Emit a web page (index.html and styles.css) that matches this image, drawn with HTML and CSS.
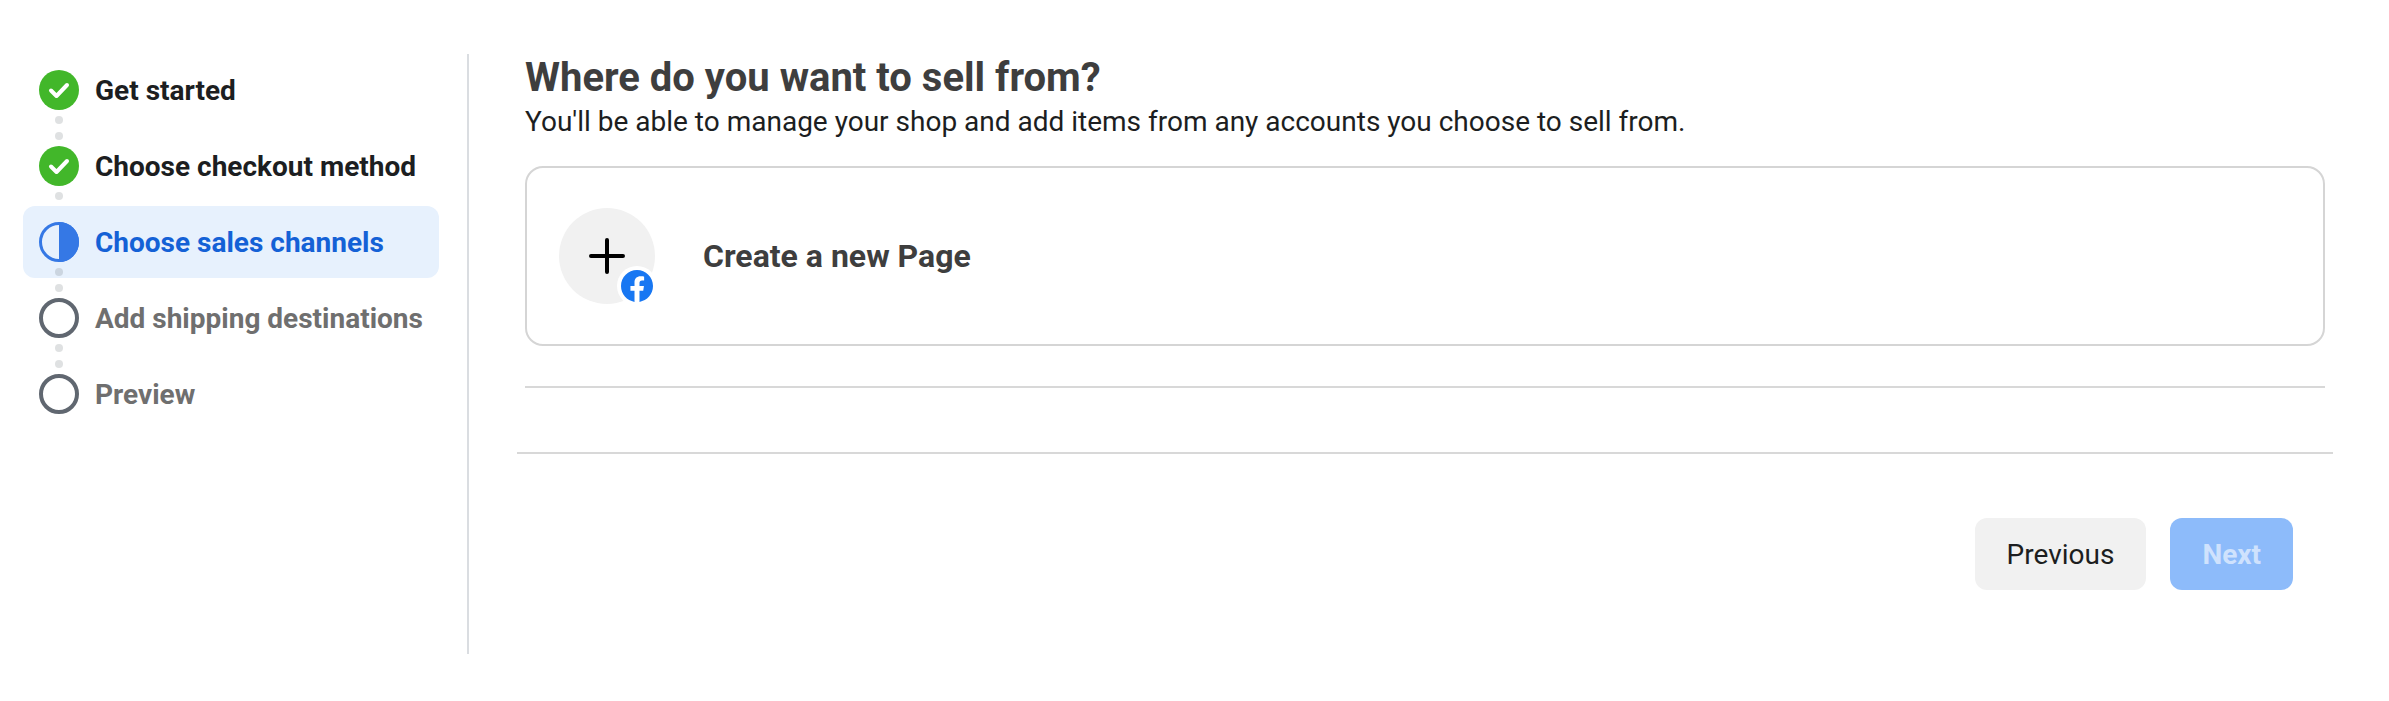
FILE: index.html
```html
<!DOCTYPE html>
<html lang="en">
  <head>
    <meta charset="UTF-8" />
    <title>Where do you want to sell from?</title>
    <link rel="stylesheet" href="styles.css">
  </head>
  <body>
    <div class="page">
      <nav class="steps">
        <div class="step step-done">
          <svg class="step-icon" viewBox="0 0 40 40"><circle cx="20" cy="20" r="20" fill="#42b72a"/><path d="M12 20.5l5.5 5.5 10.5-11" fill="none" stroke="#fff" stroke-width="4" stroke-linecap="round" stroke-linejoin="round"/></svg>
          <span>Get started</span>
        </div>
        <div class="step step-done">
          <svg class="step-icon" viewBox="0 0 40 40"><circle cx="20" cy="20" r="20" fill="#42b72a"/><path d="M12 20.5l5.5 5.5 10.5-11" fill="none" stroke="#fff" stroke-width="4" stroke-linecap="round" stroke-linejoin="round"/></svg>
          <span>Choose checkout method</span>
        </div>
        <div class="step step-current">
          <svg class="step-icon" viewBox="0 0 40 40"><circle cx="20" cy="20" r="18.5" fill="none" stroke="#3578e5" stroke-width="3"/><path d="M20 0a20 20 0 0 1 0 40z" fill="#3578e5"/></svg>
          <span>Choose sales channels</span>
        </div>
        <div class="step step-todo">
          <svg class="step-icon" viewBox="0 0 40 40"><circle cx="20" cy="20" r="18" fill="none" stroke="#606770" stroke-width="4"/></svg>
          <span>Add shipping destinations</span>
        </div>
        <div class="step step-todo step-last">
          <svg class="step-icon" viewBox="0 0 40 40"><circle cx="20" cy="20" r="18" fill="none" stroke="#606770" stroke-width="4"/></svg>
          <span>Preview</span>
        </div>
      </nav>

      <main class="content">
        <div class="section">
          <h1 class="title">Where do you want to sell from?</h1>
          <p class="subtitle">You'll be able to manage your shop and add items from any accounts you choose to sell from.</p>
          <div class="card">
            <div class="avatar">
              <svg class="plus" viewBox="0 0 36 36"><path d="M18 2v32M2 18h32" fill="none" stroke="#000" stroke-width="4" stroke-linecap="round"/></svg>
              <span class="badge">
                <svg viewBox="0 0 24 24"><circle cx="12" cy="12" r="12" fill="#fff"/><path fill="#1877f2" d="M24 12.073c0-6.627-5.373-12-12-12s-12 5.373-12 12c0 5.99 4.388 10.954 10.125 11.854v-8.385H7.078v-3.47h3.047V9.43c0-3.007 1.792-4.669 4.533-4.669 1.312 0 2.686.235 2.686.235v2.953H15.83c-1.491 0-1.956.925-1.956 1.874v2.25h3.328l-.532 3.47h-2.796v8.385C19.612 23.027 24 18.062 24 12.073z"/></svg>
              </span>
            </div>
            <span class="card-label">Create a new Page</span>
          </div>
          <hr class="rule">
        </div>
        <hr class="rule rule-wide">
        <div class="actions">
          <button class="btn btn-secondary">Previous</button>
          <button class="btn btn-primary">Next</button>
        </div>
      </main>
    </div>
  </body>
</html>
```

FILE: styles.css
```css
body {
  margin: 0;
  background: #fff;
  font-family: Roboto, "Liberation Sans", sans-serif;
  color: #1c1e21;
}

.page {
  display: flex;
  align-items: flex-start;
  padding: 54px 56px 0 23px;
}

/* Left step list */
.steps {
  display: flex;
  flex-direction: column;
  gap: 4px;
  box-sizing: border-box;
  width: 446px;
  height: 600px;
  padding-right: 28px;
  border-right: 2px solid #dadde1;
}

.step {
  position: relative;
  display: flex;
  align-items: center;
  gap: 16px;
  height: 72px;
  padding-left: 16px;
  border-radius: 12px;
  font-size: 28px;
  font-weight: 700;
}

.step-icon {
  width: 40px;
  height: 40px;
  flex: none;
}

/* two dots between steps */
.step::before,
.step::after {
  content: "";
  position: absolute;
  left: 32px;
  width: 8px;
  height: 8px;
  border-radius: 50%;
  background: rgba(96, 103, 112, 0.2);
}

.step::before {
  top: 62px;
}

.step::after {
  top: 78px;
}

.step-last::before,
.step-last::after {
  display: none;
}

.step-current {
  background: #e7f1fd;
  color: #1461d6;
}

.step-todo {
  color: #6f6f6f;
}

/* Main column */
.content {
  flex: 1;
  padding-left: 48px;
}

.section {
  padding: 0 8px;
}

.title {
  margin: 0 0 2px;
  font-size: 40px;
  line-height: 48px;
  font-weight: 700;
  color: #3e3e3e;
}

.subtitle {
  margin: 0 0 26px;
  font-size: 28px;
  line-height: 36px;
}

.card {
  display: flex;
  align-items: center;
  gap: 48px;
  box-sizing: border-box;
  height: 180px;
  padding-left: 32px;
  border: 2px solid #d5d5d5;
  border-radius: 18px;
}

.avatar {
  position: relative;
  display: flex;
  align-items: center;
  justify-content: center;
  width: 96px;
  height: 96px;
  border-radius: 50%;
  background: #f1f1f1;
}

.plus {
  width: 36px;
  height: 36px;
}

.badge {
  position: absolute;
  right: -2px;
  bottom: -2px;
  width: 32px;
  height: 32px;
  padding: 4px;
  border-radius: 50%;
  background: #fff;
}

.badge svg {
  display: block;
  width: 32px;
  height: 32px;
}

.card-label {
  font-size: 32px;
  font-weight: 700;
  color: #3e3e3e;
}

.rule {
  height: 2px;
  margin: 40px 0 0;
  border: 0;
  background: #d8d8d8;
}

.rule-wide {
  margin-top: 64px;
}

.actions {
  display: flex;
  justify-content: flex-end;
  gap: 24px;
  margin-top: 64px;
  padding-right: 40px;
}

.btn {
  height: 72px;
  padding: 0 32px;
  border: 0;
  border-radius: 12px;
  font-family: inherit;
  font-size: 28px;
}

.btn-secondary {
  background: #f1f1f1;
  color: #1c1e21;
}

.btn-primary {
  background: #8dbbfa;
  color: #cfe2fd;
  font-weight: 700;
}
```
